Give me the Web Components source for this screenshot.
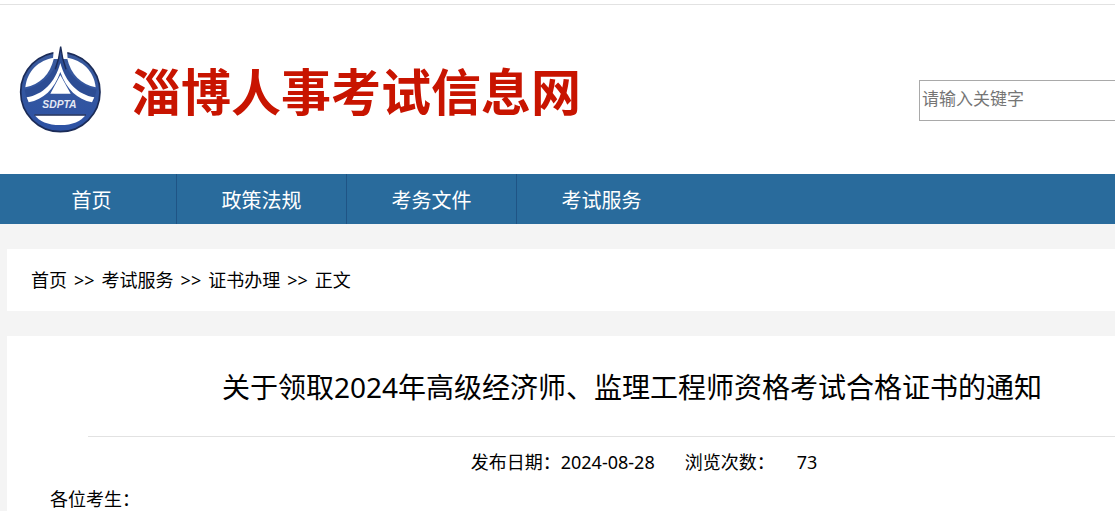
<!DOCTYPE html>
<html lang="zh-CN">
<head>
<meta charset="utf-8">
<title>淄博人事考试信息网</title>
<style>
  html { overflow-x: hidden; }
  body {
    margin: 0;
    overflow-x: clip;
    background-color: #f4f4f4;
    color: #000000;
    font-family: "Noto Sans", "Noto Sans CJK SC", sans-serif;
    font-size: 18px;
    line-height: 26px;
    --page-width: 1250px;
    --page-left: 7px;
  }
</style>
</head>
<body>
<site-header name="淄博人事考试信息网"></site-header>
<site-nav>
  <nav-item href="#home">首页</nav-item>
  <nav-item href="#policy">政策法规</nav-item>
  <nav-item href="#files">考务文件</nav-item>
  <nav-item href="#service">考试服务</nav-item>
</site-nav>
<bread-crumb>
  <a href="#home">首页</a>
  <span>&gt;&gt;</span>
  <a href="#service">考试服务</a>
  <span>&gt;&gt;</span>
  <a href="#certificate">证书办理</a>
  <span>&gt;&gt;</span>
  <span>正文</span>
</bread-crumb>
<notice-article date="2024-08-28" views="73">
  <span slot="title">关于领取2024年高级经济师、监理工程师资格考试合格证书的通知</span>
  <p>各位考生：</p>
</notice-article>

<script>
class BaseElement extends HTMLElement {
  render(html) {
    const template = document.createElement("template");
    template.innerHTML = html;
    this.attachShadow({ mode: "open" });
    this.shadowRoot.appendChild(template.content.cloneNode(true));
  }
}

class SiteLogo extends BaseElement {
  constructor() {
    super();
    this.render(`
      <style>
        :host { display: block; width: 84px; height: 90px; }
        svg { display: block; width: 100%; height: 100%; }
        text {
          font-family: "Liberation Sans", sans-serif;
          font-size: 31px;
          font-weight: bold;
          font-style: italic;
        }
      </style>
      <svg viewBox="24 30 252 270" role="img" aria-label="SDPTA">
        <defs>
          <linearGradient id="blue" x1="0" y1="0" x2="0" y2="1">
            <stop offset="0" stop-color="#3a5a9c"/>
            <stop offset="1" stop-color="#2d52a4"/>
          </linearGradient>
        </defs>
        <circle cx="151" cy="171" r="119" fill="url(#blue)" stroke="#1b2b57" stroke-width="5"/>
        <!-- the two open areas beside the roof -->
        <path d="M132 68 C86 75 51 108 46 157 C88 149 121 119 132 68 Z" fill="#ffffff"/>
        <path d="M171 68 C217 75 252 108 257 157 C215 149 182 119 171 68 Z" fill="#ffffff"/>
        <path d="M131 44 L171 44 L173 72 L129 72 Z" fill="#ffffff"/>
        <!-- spire and roof -->
        <path d="M152 35 C146 91 116 147 44 164 L51 199 C94 188 128 158 151 94 C174 158 208 188 251 199 L260 164 C188 147 158 91 152 35 Z" fill="#2d4d94"/>
        <path d="M152 35 C149 61 145 79 136 103 M152 35 C155 61 159 79 168 103" fill="none" stroke="#1b2b57" stroke-width="4"/>
        <path d="M151 84 C135 143 99 179 50 187 L56 202 C101 193 132 164 151 111 C170 164 202 193 246 202 L253 187 C204 179 167 143 151 84 Z" fill="#ffffff"/>
        <path d="M151 120 L121 176 L182 176 Z" fill="#ffffff"/>
        <text x="97" y="219" fill="#e4e9f4">SDPTA</text>
        <path d="M73 239 L228 239 C212 259 188 270 151 270 C113 270 88 259 73 239 Z" fill="#ffffff"/>
        <path d="M73 240 L228 240" stroke="#1b2b57" stroke-width="4"/>
      </svg>
    `);
  }
}
customElements.define("site-logo", SiteLogo);

class SiteHeader extends BaseElement {
  constructor() {
    super();
    this.render(`
      <style>
        :host {
          display: block;
          padding-top: 4px;
          background-color: #ffffff;
        }
        header {
          display: flex;
          align-items: center;
          box-sizing: border-box;
          height: 170px;
          min-width: var(--page-width);
          padding: 0 0 0 18px;
          border-top: 1px solid #e2e2e2;
        }
        h1 {
          flex: 1;
          margin: 4px 0 0 29px;
          color: #c81400;
          font-size: 50px;
          line-height: 60px;
          font-weight: bold;
        }
        input {
          box-sizing: border-box;
          width: 331px;
          height: 41px;
          margin-top: 22px;
          padding: 0 2px 4px;
          border: 1px solid #a9a9a9;
          border-radius: 0;
          background-color: #ffffff;
          font: inherit;
          font-size: 17px;
        }
        input::placeholder { color: #757575; }
      </style>
      <header>
        <site-logo></site-logo>
        <h1></h1>
        <input type="text" aria-label="请输入关键字" placeholder="请输入关键字">
      </header>
    `);
    this.shadowRoot.querySelector("h1").textContent = this.getAttribute("name");
  }
}
customElements.define("site-header", SiteHeader);

class SiteNav extends BaseElement {
  constructor() {
    super();
    this.render(`
      <style>
        :host { display: block; background-color: #296b9c; }
        nav { display: flex; padding-left: var(--page-left); }
      </style>
      <nav><slot></slot></nav>
    `);
  }
}
customElements.define("site-nav", SiteNav);

class NavItem extends BaseElement {
  constructor() {
    super();
    this.render(`
      <style>
        :host {
          display: block;
          box-sizing: border-box;
          width: 170px;
          border-right: 1px solid #1f5485;
        }
        :host(:last-child) { border-right-color: transparent; }
        a {
          display: block;
          padding-top: 4px;
          color: #ffffff;
          font-size: 20px;
          line-height: 46px;
          text-align: center;
          text-decoration: none;
        }
      </style>
      <a><slot></slot></a>
    `);
    this.shadowRoot.querySelector("a").href = this.getAttribute("href");
  }
}
customElements.define("nav-item", NavItem);

class BreadCrumb extends BaseElement {
  constructor() {
    super();
    this.render(`
      <style>
        :host {
          display: flex;
          gap: 7px;
          box-sizing: border-box;
          min-width: var(--page-width);
          margin: 25px 0 25px var(--page-left);
          padding: 18px 24px;
          background-color: #ffffff;
        }
        ::slotted(a) { color: inherit; text-decoration: none; }
      </style>
      <slot></slot>
    `);
  }
}
customElements.define("bread-crumb", BreadCrumb);

class NoticeArticle extends BaseElement {
  constructor() {
    super();
    this.render(`
      <style>
        :host {
          display: block;
          box-sizing: border-box;
          min-width: var(--page-width);
          min-height: 175px;
          margin-left: var(--page-left);
          background-color: #ffffff;
        }
        h2 {
          margin: 0 81px;
          padding-top: 2px;
          border-bottom: 1px solid #e2e2e2;
          font-size: 28px;
          font-weight: normal;
          line-height: 98px;
          text-align: center;
        }
        .meta {
          display: flex;
          justify-content: center;
          gap: 30px;
          padding: 12px 0 0 24px;
        }
        .views { margin-left: 22px; }
        .content { padding: 11px 43px 0; }
        ::slotted(p) { margin: 0; }
      </style>
      <article>
        <h2><slot name="title"></slot></h2>
        <div class="meta">
          <span>发布日期：<span class="date"></span></span>
          <span>浏览次数：<span class="views"></span></span>
        </div>
        <div class="content"><slot></slot></div>
      </article>
    `);
    this.shadowRoot.querySelector(".date").textContent = this.getAttribute("date");
    this.shadowRoot.querySelector(".views").textContent = this.getAttribute("views");
  }
}
customElements.define("notice-article", NoticeArticle);
</script>
</body>
</html>
